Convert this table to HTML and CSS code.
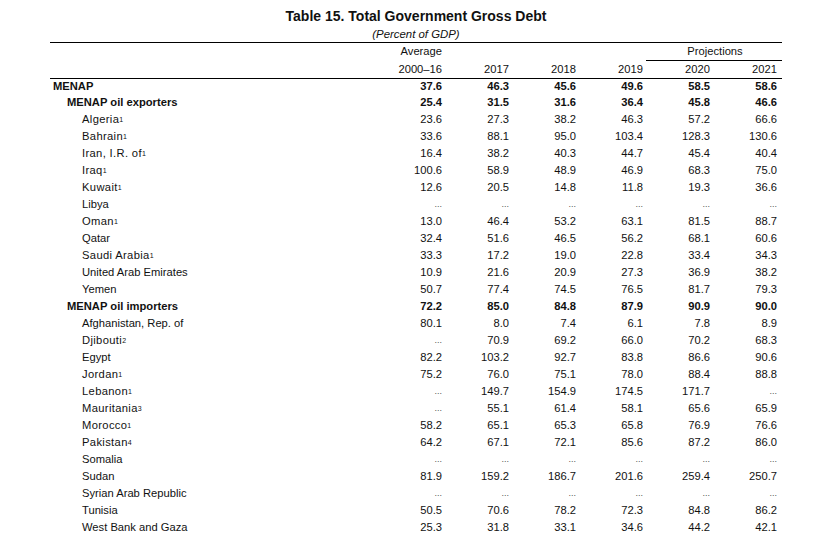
FILE: index.html
```html
<!DOCTYPE html>
<html lang="en">
<head>
<meta charset="utf-8">
<title>Table 15. Total Government Gross Debt</title>
<link rel="stylesheet" href="styles.css">
</head>
<body>
<div class="page">
  <h1 class="title">Table 15. Total Government Gross Debt</h1>
  <p class="subtitle">(Percent of GDP)</p>
  <table class="debt">
    <colgroup>
      <col class="c-label">
      <col class="c-num"><col class="c-num"><col class="c-num"><col class="c-num"><col class="c-num"><col class="c-last">
    </colgroup>
    <thead>
      <tr class="h1">
        <th></th><th class="num">Average</th><th></th><th></th><th></th><th class="proj" colspan="2">Projections</th>
      </tr>
      <tr class="h2">
        <th></th><th class="num">2000–16</th><th class="num">2017</th><th class="num">2018</th><th class="num">2019</th><th class="num">2020</th><th class="num">2021</th>
      </tr>
    </thead>
    <tbody>
      <tr class="bold first"><td class="l0">MENAP</td><td>37.6</td><td>46.3</td><td>45.6</td><td>49.6</td><td>58.5</td><td>58.6</td></tr>
      <tr class="bold"><td class="l1">MENAP oil exporters</td><td>25.4</td><td>31.5</td><td>31.6</td><td>36.4</td><td>45.8</td><td>46.6</td></tr>
      <tr><td class="l2 sp">Algeria<sup>1</sup></td><td>23.6</td><td>27.3</td><td>38.2</td><td>46.3</td><td>57.2</td><td>66.6</td></tr>
      <tr><td class="l2 sp">Bahrain<sup>1</sup></td><td>33.6</td><td>88.1</td><td>95.0</td><td>103.4</td><td>128.3</td><td>130.6</td></tr>
      <tr><td class="l2 sp">Iran, I.R. of<sup>1</sup></td><td>16.4</td><td>38.2</td><td>40.3</td><td>44.7</td><td>45.4</td><td>40.4</td></tr>
      <tr><td class="l2 sp">Iraq<sup>1</sup></td><td>100.6</td><td>58.9</td><td>48.9</td><td>46.9</td><td>68.3</td><td>75.0</td></tr>
      <tr><td class="l2 sp">Kuwait<sup>1</sup></td><td>12.6</td><td>20.5</td><td>14.8</td><td>11.8</td><td>19.3</td><td>36.6</td></tr>
      <tr><td class="l2">Libya</td><td class="na">...</td><td class="na">...</td><td class="na">...</td><td class="na">...</td><td class="na">...</td><td class="na">...</td></tr>
      <tr><td class="l2 sp">Oman<sup>1</sup></td><td>13.0</td><td>46.4</td><td>53.2</td><td>63.1</td><td>81.5</td><td>88.7</td></tr>
      <tr><td class="l2">Qatar</td><td>32.4</td><td>51.6</td><td>46.5</td><td>56.2</td><td>68.1</td><td>60.6</td></tr>
      <tr><td class="l2 sp">Saudi Arabia<sup>1</sup></td><td>33.3</td><td>17.2</td><td>19.0</td><td>22.8</td><td>33.4</td><td>34.3</td></tr>
      <tr><td class="l2">United Arab Emirates</td><td>10.9</td><td>21.6</td><td>20.9</td><td>27.3</td><td>36.9</td><td>38.2</td></tr>
      <tr><td class="l2">Yemen</td><td>50.7</td><td>77.4</td><td>74.5</td><td>76.5</td><td>81.7</td><td>79.3</td></tr>
      <tr class="bold"><td class="l1">MENAP oil importers</td><td>72.2</td><td>85.0</td><td>84.8</td><td>87.9</td><td>90.9</td><td>90.0</td></tr>
      <tr><td class="l2">Afghanistan, Rep. of</td><td>80.1</td><td>8.0</td><td>7.4</td><td>6.1</td><td>7.8</td><td>8.9</td></tr>
      <tr><td class="l2 sp">Djibouti<sup>2</sup></td><td class="na">...</td><td>70.9</td><td>69.2</td><td>66.0</td><td>70.2</td><td>68.3</td></tr>
      <tr><td class="l2">Egypt</td><td>82.2</td><td>103.2</td><td>92.7</td><td>83.8</td><td>86.6</td><td>90.6</td></tr>
      <tr><td class="l2 sp">Jordan<sup>1</sup></td><td>75.2</td><td>76.0</td><td>75.1</td><td>78.0</td><td>88.4</td><td>88.8</td></tr>
      <tr><td class="l2 sp">Lebanon<sup>1</sup></td><td class="na">...</td><td>149.7</td><td>154.9</td><td>174.5</td><td>171.7</td><td class="na">...</td></tr>
      <tr><td class="l2 sp">Mauritania<sup>3</sup></td><td class="na">...</td><td>55.1</td><td>61.4</td><td>58.1</td><td>65.6</td><td>65.9</td></tr>
      <tr><td class="l2 sp">Morocco<sup>1</sup></td><td>58.2</td><td>65.1</td><td>65.3</td><td>65.8</td><td>76.9</td><td>76.6</td></tr>
      <tr><td class="l2 sp">Pakistan<sup>4</sup></td><td>64.2</td><td>67.1</td><td>72.1</td><td>85.6</td><td>87.2</td><td>86.0</td></tr>
      <tr><td class="l2">Somalia</td><td class="na">...</td><td class="na">...</td><td class="na">...</td><td class="na">...</td><td class="na">...</td><td class="na">...</td></tr>
      <tr><td class="l2">Sudan</td><td>81.9</td><td>159.2</td><td>186.7</td><td>201.6</td><td>259.4</td><td>250.7</td></tr>
      <tr><td class="l2">Syrian Arab Republic</td><td class="na">...</td><td class="na">...</td><td class="na">...</td><td class="na">...</td><td class="na">...</td><td class="na">...</td></tr>
      <tr><td class="l2">Tunisia</td><td>50.5</td><td>70.6</td><td>78.2</td><td>72.3</td><td>84.8</td><td>86.2</td></tr>
      <tr><td class="l2">West Bank and Gaza</td><td>25.3</td><td>31.8</td><td>33.1</td><td>34.6</td><td>44.2</td><td>42.1</td></tr>
    </tbody>
  </table>
</div>
</body>
</html>
```

FILE: styles.css
```css
html, body {
  margin: 0;
  padding: 0;
  background: #ffffff;
}

body {
  font-family: "Liberation Sans", Arial, sans-serif;
  color: #111111;
}

.page {
  width: 732px;
  margin-left: 50px;
  padding-top: 7px;
}

.title {
  margin: 0;
  font-size: 14px;
  line-height: 18px;
  font-weight: bold;
  text-align: center;
}

.subtitle {
  margin: 0;
  padding-top: 1px;
  font-size: 11.4px;
  line-height: 16px;
  font-style: italic;
  text-align: center;
}

.debt {
  width: 732px;
  table-layout: fixed;
  border-collapse: collapse;
  border-spacing: 0;
  font-size: 11.2px;
}

.c-label { width: 328px; }
.c-num { width: 67px; }
.c-last { width: 69px; }

.debt th,
.debt td {
  padding: 0 3px 0 0;
  height: 17px;
  line-height: 17px;
  white-space: nowrap;
  font-weight: normal;
  text-align: right;
  vertical-align: middle;
}

.debt th:last-child,
.debt td:last-child {
  padding-right: 5px;
}

.debt thead .h1 th {
  border-top: 1px solid #000000;
}

.debt thead .h1 th.proj {
  text-align: center;
  border-bottom: 1px solid #000000;
  padding-right: 0;
  padding-left: 2px;
}

.debt thead .h2 th {
  border-bottom: 1px solid #000000;
}

.debt tbody tr.first td {
  height: 15px;
  line-height: 15px;
}

.debt td.l0,
.debt td.l1,
.debt td.l2 {
  text-align: left;
}

.debt td.l0 { padding-left: 3px; }
.debt td.l1 { padding-left: 17px; }
.debt td.l2 { padding-left: 32px; }

.debt .sp { letter-spacing: 0.35px; }

.debt tr.bold td { font-weight: bold; }

.debt td.na {
  color: #555555;
  font-size: 9px;
}

.debt sup {
  font-size: 7px;
  line-height: 0;
  vertical-align: 1.5px;
  letter-spacing: 0;
}
```
